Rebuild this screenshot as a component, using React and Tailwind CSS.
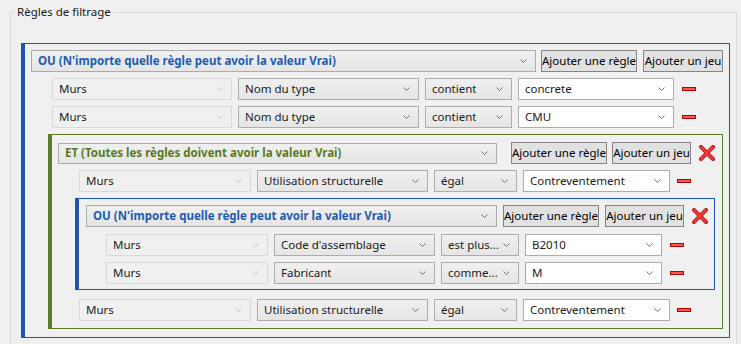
import React from "react";

const Chevron = ({ light }) => (
  <svg width="7" height="4" viewBox="0 0 7 4" className="shrink-0 block">
    <path
      d="M0.5 0.5 L3.5 3.5 L6.5 0.5"
      fill="none"
      strokeWidth="1"
      className={light ? "stroke-[#c4c4c4]" : "stroke-[#6d6d6d]"}
    />
  </svg>
);

// variant: "disabled" | "normal" | "white"
const Combo = ({ text, w, variant = "normal", title, h = "h-[22px]" }) => {
  const look =
    variant === "disabled"
      ? "bg-[#f0f0f0] border-[#d9d9d9]"
      : variant === "white"
      ? "bg-white border-[#acacac]"
      : "bg-gradient-to-b from-[#f0f0f0] to-[#e5e5e5] border-[#acacac]";
  const txt = title
    ? `text-[11.5px] font-bold ${title}`
    : "text-[11.5px] text-[#1a1a1a]";
  return (
    <div className={`${h} ${w} shrink-0 flex items-center justify-between border pl-[6px] pr-[8px] ${look}`}>
      <span className={`truncate leading-[16px] ${txt}`}>{text}</span>
      <Chevron light={variant === "disabled"} />
    </div>
  );
};

const Btn = ({ label, className }) => (
  <button
    className={`h-[22px] shrink-0 flex items-center justify-center border border-[#858585] bg-[#e1e1e1] text-[11.5px] leading-[16px] text-black whitespace-nowrap px-0 ${className}`}
  >
    {label}
  </button>
);

const Minus = ({ className }) => (
  <div className={`w-[14px] h-[4px] bg-[#f25a5a] border border-[#b30000] shrink-0 ${className}`} />
);

const RedX = ({ className }) => (
  <svg width="16" height="16" viewBox="0 0 16 16" className={`shrink-0 block ${className}`}>
    <path d="M2 2 L14 14 M14 2 L2 14" stroke="#b81c1c" strokeWidth="4" strokeLinecap="square" />
    <path d="M2.5 2.5 L13.5 13.5 M13.5 2.5 L2.5 13.5" stroke="#ef3b3b" strokeWidth="2.4" strokeLinecap="square" />
  </svg>
);

const Rule = ({ widths, cat, param, op, value, className, minusMl = "ml-[2px]" }) => (
  <div className={`flex items-center gap-[6px] pl-[27px] ${className}`}>
    <Combo text={cat} w={widths[0]} variant="disabled" />
    <Combo text={param} w={widths[1]} />
    <Combo text={op} w={widths[2]} />
    <Combo text={value} w={widths[3]} variant="white" />
    <Minus className={minusMl} />
  </div>
);

const OU_TEXT = "OU (N'importe quelle règle peut avoir la valeur Vrai)";
const ET_TEXT = "ET (Toutes les règles doivent avoir la valeur Vrai)";

export default function App() {
  const outerW = ["w-[180px]", "w-[181px]", "w-[87px]", "w-[156px]"];
  const etW = ["w-[172px]", "w-[171px]", "w-[83px]", "w-[147px]"];
  const innerW = ["w-[162px]", "w-[161px]", "w-[78px]", "w-[137px]"];

  return (
    <div className="w-[741px] h-[344px] overflow-hidden bg-[#f0f0f0] font-['Noto_Sans','Open_Sans',sans-serif]">
      <fieldset className="mt-[4px] ml-[10px] w-[727px] h-[360px] border border-[#dcdcdc]">
        <legend className="ml-[4px] px-[2px] text-[11.5px] leading-[16px] text-[#1a1a1a]">
          Règles de filtrage
        </legend>
        <div className="pl-[10px] pr-[6px] pt-[23px]">
          {/* OU outer */}
          <div className="border border-l-[4px] border-[#1c56b0] pt-[6px] pb-[8px]">
            <div className="flex items-center pl-[6px]">
              <Combo text={OU_TEXT} w="w-[505px]" title="text-[#1d5cb5]" />
              <Btn label="Ajouter une règle" className="w-[96px] ml-[5px]" />
              <Btn label="Ajouter un jeu" className="w-[80px] ml-[6px]" />
            </div>
            <Rule widths={outerW} cat="Murs" param="Nom du type" op="contient" value="concrete" className="mt-[6px]" />
            <Rule widths={outerW} cat="Murs" param="Nom du type" op="contient" value="CMU" className="mt-[6px]" />

            {/* ET */}
            <div className="mt-[6px] ml-[23px] mr-[6px] border border-l-[4px] border-[#5b7b2a] pt-[7px] pb-[7px]">
              <div className="flex items-center pl-[6px]">
                <Combo text={ET_TEXT} w="w-[439px]" title="text-[#5a7a22]" h="h-[21px]" />
                <Btn label="Ajouter une règle" className="w-[96px] ml-[14px]" />
                <Btn label="Ajouter un jeu" className="w-[79px] ml-[5px]" />
                <RedX className="ml-[8px]" />
              </div>
              <Rule widths={etW} cat="Murs" param="Utilisation structurelle" op="égal" value="Contreventement" className="mt-[6px]" minusMl="ml-[1px]" />

              {/* OU inner */}
              <div className="mt-[6px] ml-[23px] mr-[7px] border border-l-[4px] border-[#1c56b0] pt-[6px] pb-[5px]">
                <div className="flex items-center pl-[7px]">
                  <Combo text={OU_TEXT} w="w-[411px]" title="text-[#1d5cb5]" />
                  <Btn label="Ajouter une règle" className="w-[96px] ml-[6px]" />
                  <Btn label="Ajouter un jeu" className="w-[79px] ml-[6px]" />
                  <RedX className="ml-[8px]" />
                </div>
                <Rule widths={innerW} cat="Murs" param="Code d'assemblage" op="est plus..." value="B2010" className="mt-[7px]" />
                <Rule widths={innerW} cat="Murs" param="Fabricant" op="comme..." value="M" className="mt-[6px]" />
              </div>

              <Rule widths={etW} cat="Murs" param="Utilisation structurelle" op="égal" value="Contreventement" className="mt-[9px]" minusMl="ml-[1px]" />
            </div>
          </div>
        </div>
      </fieldset>
    </div>
  );
}
